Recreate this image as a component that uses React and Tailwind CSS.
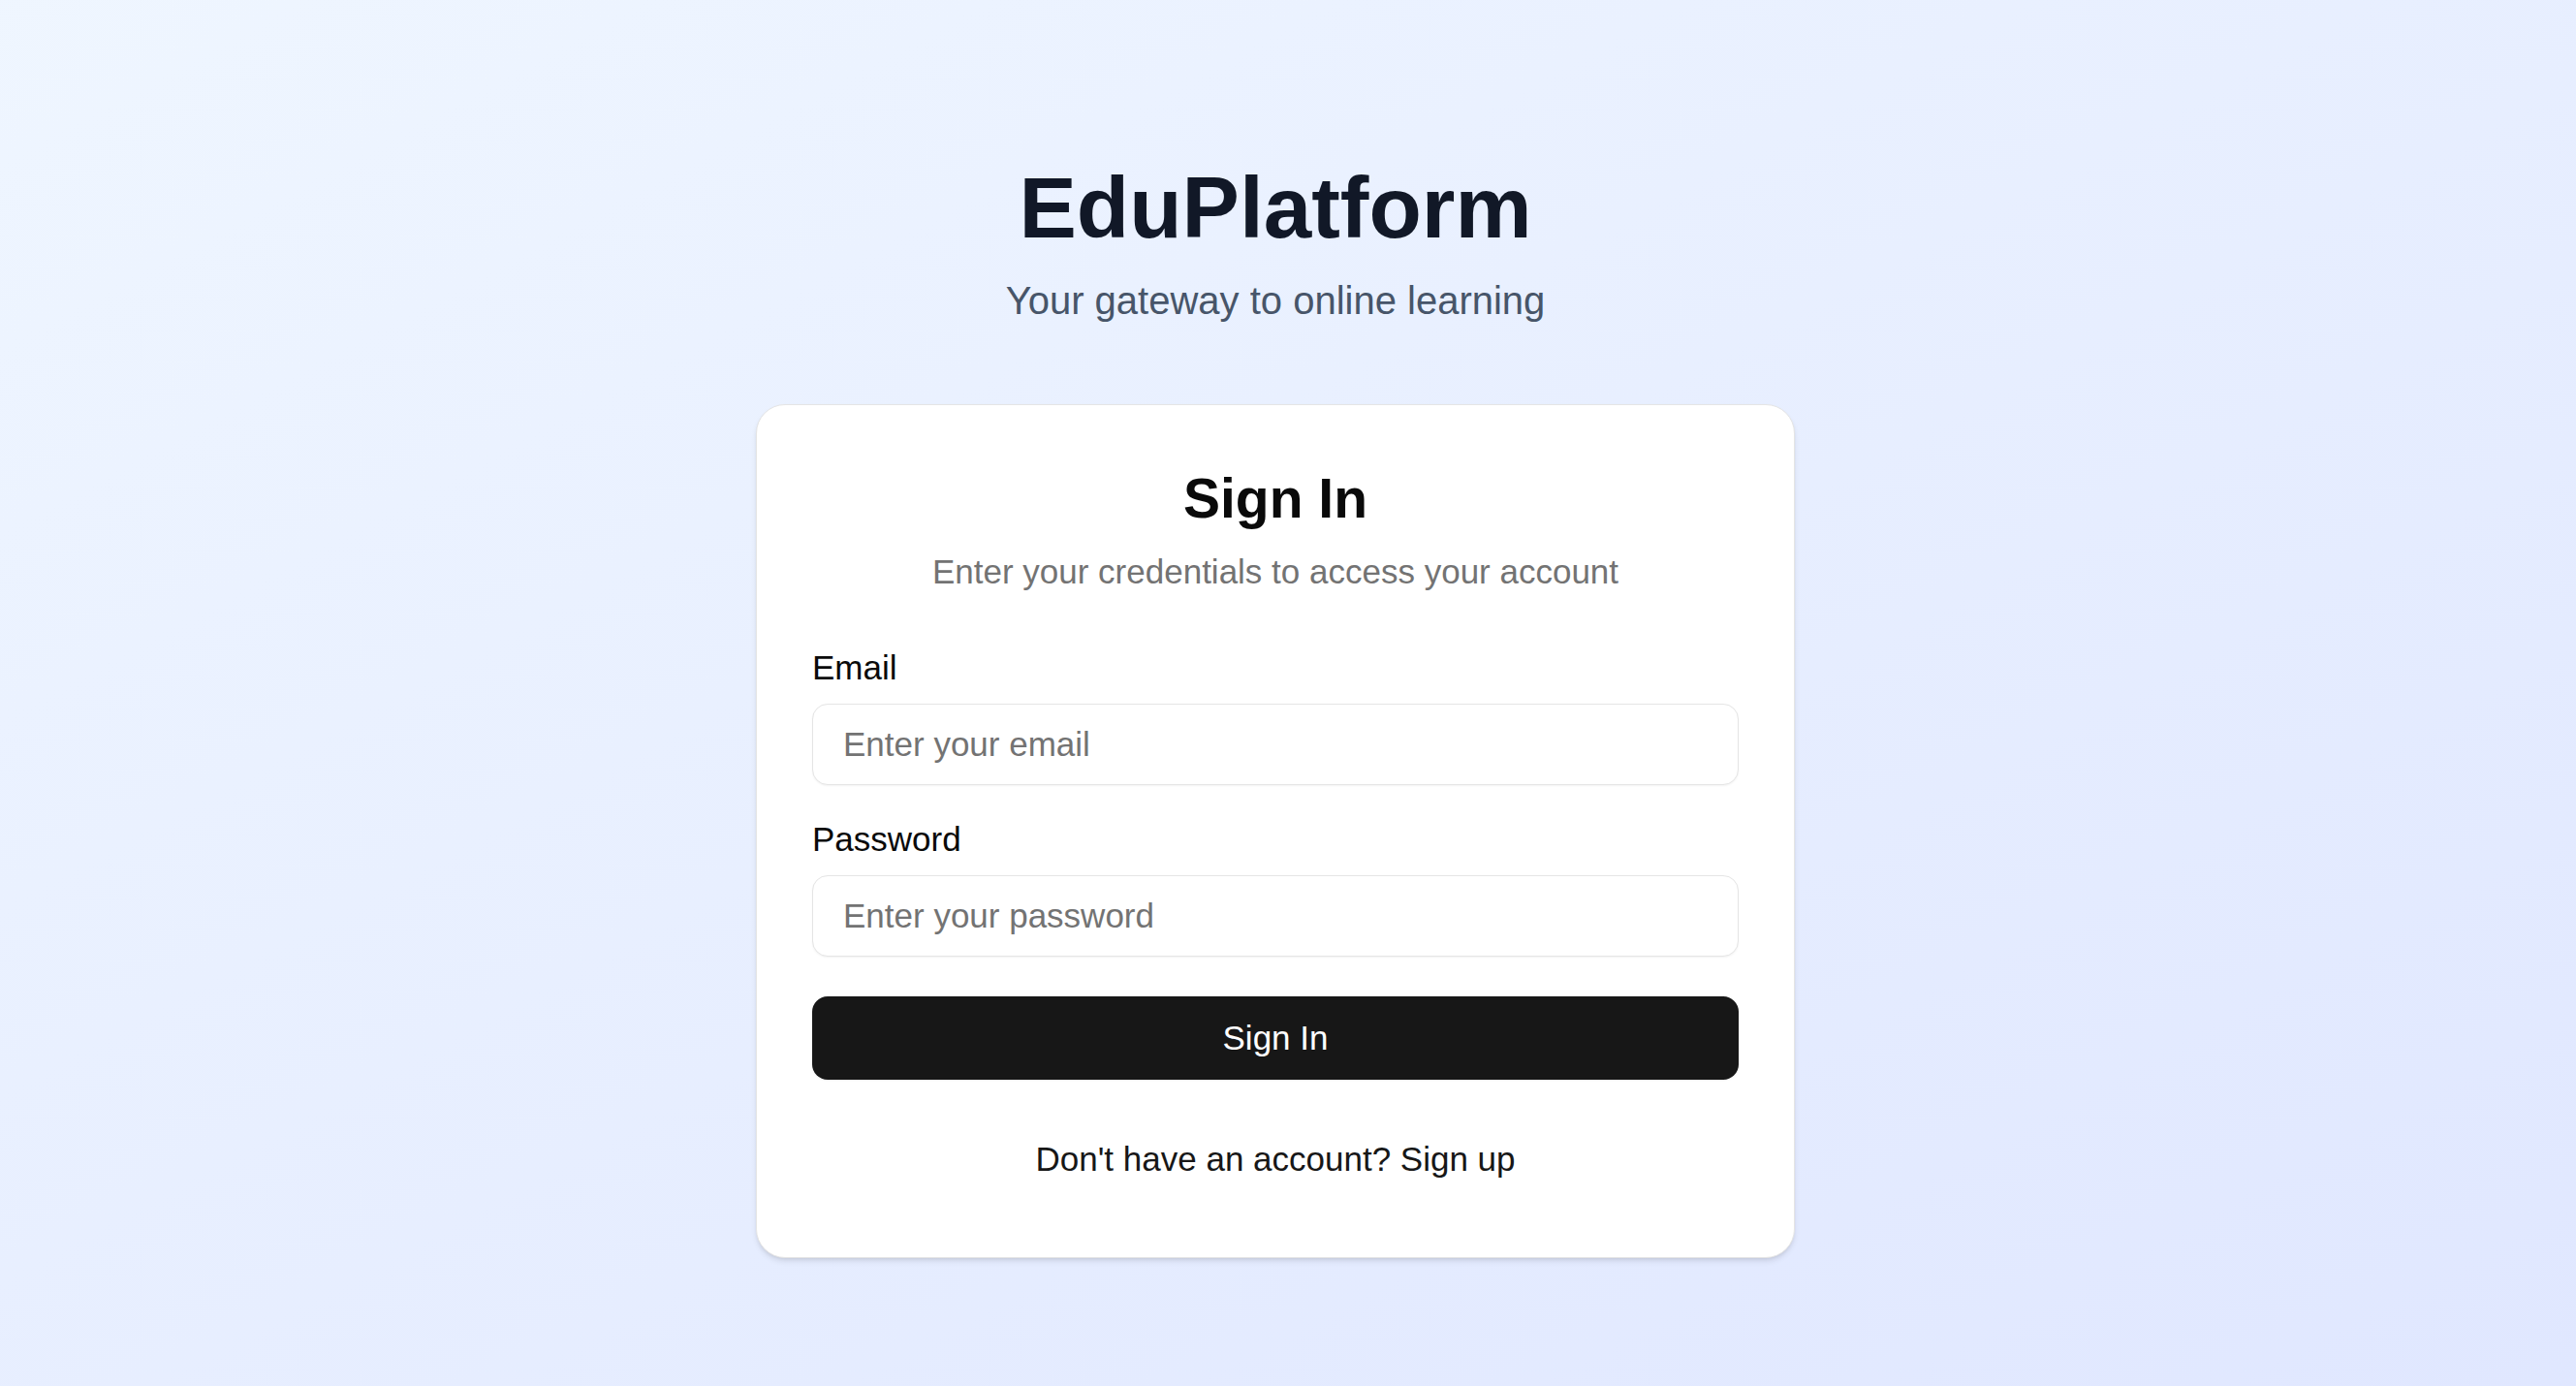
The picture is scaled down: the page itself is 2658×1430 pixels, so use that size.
import React from 'react';

function Field({ label, type, placeholder, className }) {
  return (
    <div className={className}>
      <label className="block text-[35px] leading-none text-[#0a0a0a]">{label}</label>
      <input
        type={type}
        placeholder={placeholder}
        className="mt-[20px] block h-[84px] w-full rounded-[16px] border border-[#e5e5e5] bg-white px-[31px] text-[35px] text-[#0a0a0a] shadow-xs outline-none placeholder:text-[#737373]"
      />
    </div>
  );
}

function App() {
  return (
    <div
      className="min-h-screen bg-linear-to-br from-blue-50 to-indigo-100 pr-[26px]"
      style={{ fontFamily: '"Liberation Sans", Arial, sans-serif' }}
    >
      <div className="flex flex-col items-center pt-[170px]">
        <h1 className="text-[89px] font-bold leading-none text-[#111827]">EduPlatform</h1>
        <p className="mt-[31px] text-[40px] leading-none text-[#475569]">Your gateway to online learning</p>

        <div className="mt-[87px] w-[1072px] rounded-[30px] border border-[#e5e5e5] bg-white px-[57px] pt-[68px] pb-[84px] shadow-md">
          <div className="text-center">
            <h2 className="text-[57px] font-bold leading-none text-[#0a0a0a]">Sign In</h2>
            <p className="mt-[29px] text-[35px] leading-none text-[#737373]">
              Enter your credentials to access your account
            </p>
          </div>

          <Field className="mt-[64px]" label="Email" type="email" placeholder="Enter your email" />
          <Field className="mt-[38px]" label="Password" type="password" placeholder="Enter your password" />

          <button className="mt-[41px] flex h-[86px] w-full items-center justify-center rounded-[16px] bg-[#171717] text-[35px] text-white shadow-xs">
            Sign In
          </button>

          <p className="mt-[64px] text-center text-[35px] leading-none text-[#171717]">
            Don't have an account? Sign up
          </p>
        </div>
      </div>
    </div>
  );
}

export default App;
